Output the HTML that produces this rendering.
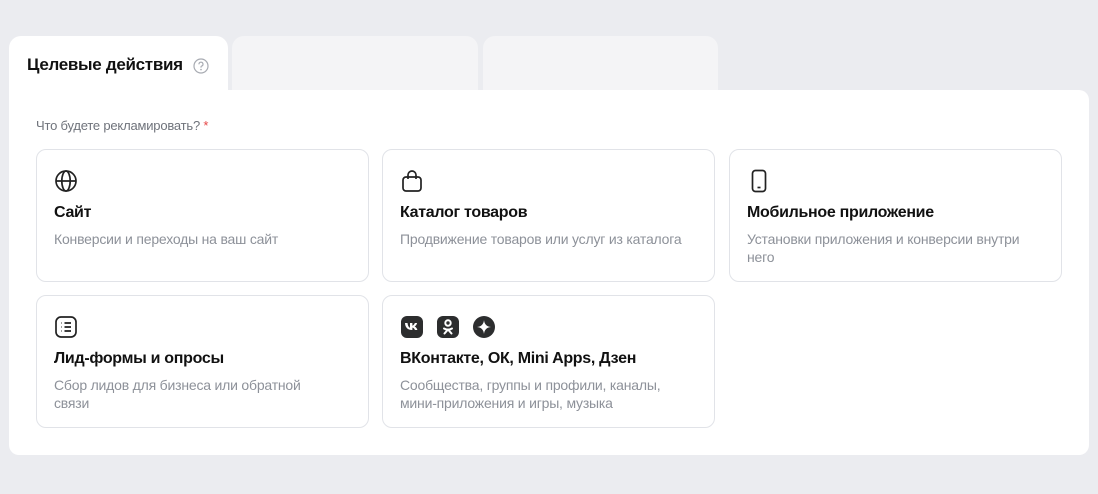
<!DOCTYPE html><html><head><meta charset="utf-8"><style>
*{box-sizing:border-box;margin:0;padding:0}
body{width:1098px;height:494px;background:#ebecf0;font-family:"Liberation Sans",sans-serif;position:relative;overflow:hidden}
.tab{position:absolute;top:36px;height:56px;border-radius:12px 12px 0 0}
.panel{position:absolute;left:9px;top:90px;width:1080px;height:365px;background:#fff;border-radius:0 10px 10px 10px}
.card{position:absolute;width:333px;height:133px;border:1px solid #e1e3e8;border-radius:10px;background:#fff}
.card svg.ic{position:absolute;left:17px;top:19px}
.t{position:absolute;left:17px;top:54px;font-size:16px;font-weight:bold;color:#111;letter-spacing:-.3px}
.d{position:absolute;left:17px;top:80px;font-size:14px;color:#8d9199;line-height:18px;width:285px;letter-spacing:-.2px}
</style></head><body>
<div class="tab" style="left:9px;width:219px;background:#fff">
<div style="position:absolute;left:18px;top:19px;font-size:17px;font-weight:bold;color:#111;letter-spacing:-.3px">Целевые действия</div>
<svg style="position:absolute;left:184px;top:22px" width="16" height="16" viewBox="0 0 16 16"><circle cx="8" cy="8" r="7" fill="none" stroke="#a8abb2" stroke-width="1.2"/><path d="M6 6.3a2 2 0 1 1 2.6 1.8c-.5.2-.6.5-.6 1v.5" fill="none" stroke="#a8abb2" stroke-width="1.2"/><circle cx="8" cy="11.6" r=".8" fill="#a8abb2"/></svg>
</div>
<div class="tab" style="left:232px;width:246px;background:#f4f4f6"></div>
<div class="tab" style="left:483px;width:235px;background:#f4f4f6"></div>
<div class="panel">
<div style="position:absolute;left:27px;top:28px;font-size:13px;color:#6f737b;letter-spacing:-.2px">Что будете рекламировать?<span style="color:#e64646"> *</span></div>
</div>
<div class="card" style="left:36px;top:149px">
<svg class="ic" width="24" height="24" viewBox="0 0 24 24" fill="none" stroke="#222" stroke-width="1.7"><circle cx="12" cy="12" r="10"/><ellipse cx="12" cy="12" rx="4.2" ry="10"/><path d="M2 12h20"/></svg>
<div class="t">Сайт</div><div class="d">Конверсии и переходы на ваш сайт</div></div>
<div class="card" style="left:382px;top:149px">
<svg class="ic" width="24" height="24" viewBox="0 0 24 24" fill="none" stroke="#222" stroke-width="1.7"><rect x="3" y="8" width="18" height="14" rx="3"/><path d="M8 10V6a4 4 0 0 1 8 0v4"/></svg>
<div class="t">Каталог товаров</div><div class="d" style="width:310px">Продвижение товаров или услуг из каталога</div></div>
<div class="card" style="left:729px;top:149px">
<svg class="ic" width="24" height="24" viewBox="0 0 24 24" fill="none" stroke="#222" stroke-width="1.7"><rect x="5.5" y="1.5" width="13" height="21" rx="3"/><path d="M10.5 18.5h3"/></svg>
<div class="t">Мобильное приложение</div><div class="d" style="width:290px">Установки приложения и конверсии внутри него</div></div>
<div class="card" style="left:36px;top:295px">
<svg class="ic" width="24" height="24" viewBox="0 0 24 24" fill="none" stroke="#222" stroke-width="1.7"><rect x="2" y="2" width="20" height="20" rx="5"/><path d="M7 8h.5M7 12h.5M7 16h.5M10.5 8H17M10.5 12H17M10.5 16H17"/></svg>
<div class="t">Лид-формы и опросы</div><div class="d" style="width:270px">Сбор лидов для бизнеса или обратной связи</div></div>
<div class="card" style="left:382px;top:295px">
<svg style="position:absolute;left:17px;top:19px" width="100" height="24" viewBox="0 0 100 24">
<rect x="1" y="1" width="22" height="22" rx="6" fill="#2c2d2e"/><path d="M5 8h2.5c.3 3 1.6 4.5 2.5 4.8V8h2.4v2.7c.9-.1 2-1.4 2.4-2.7h2.3c-.4 1.7-1.6 3-2.5 3.5.9.4 2.300 1.5 2.8 3.5h-2.5c-.4-1.3-1.4-2.3-2.5-2.4V15h-.3C7.6 15 5.2 12.4 5 8z" fill="#fff"/>
<rect x="37" y="1" width="22" height="22" rx="6" fill="#2c2d2e"/><circle cx="48" cy="8" r="2.7" fill="none" stroke="#fff" stroke-width="2"/><path d="M44 13.5c2.5 1.5 5.5 1.5 8 0M48 14.5l-3.5 4M48 14.5l3.5 4" stroke="#fff" stroke-width="2" fill="none" stroke-linecap="round"/>
<circle cx="84" cy="12" r="11" fill="#2c2d2e"/><path d="M84 5c.3 4 2.7 6.7 7 7-4.3.3-6.7 3-7 7-.3-4-2.7-6.7-7-7 4.3-.3 6.7-3 7-7z" fill="#fff"/></svg>
<div class="t">ВКонтакте, ОК, Mini Apps, Дзен</div><div class="d">Сообщества, группы и профили, каналы, мини-приложения и игры, музыка</div></div>
</body></html>
